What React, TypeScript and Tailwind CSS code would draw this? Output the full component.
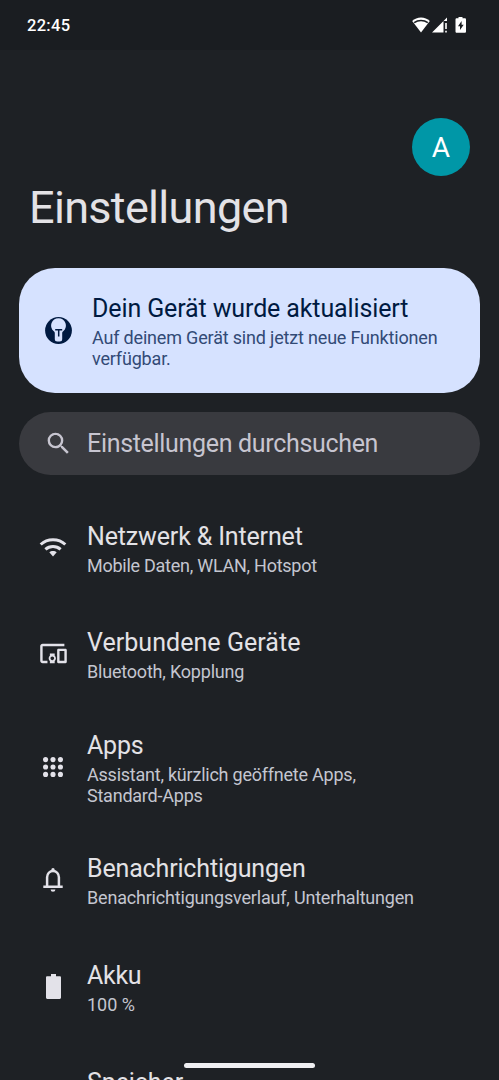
import type { ReactNode } from "react";
import { MdSearch, MdDevicesOther } from "react-icons/md";

type Item = {
  title: string;
  titleClass: string;
  lines: string[];
  lineClass: string;
  icon: ReactNode;
  height: string;
};

function DotsIcon() {
  const steps = [2.5, 9.75, 17];
  return (
    <svg width="20" height="20" viewBox="0 0 19.5 19.5" fill="currentColor">
      {steps.map((y) => steps.map((x) => <circle key={`${x}-${y}`} cx={x} cy={y} r="2.5" />))}
    </svg>
  );
}

function WifiIcon() {
  return (
    <svg width="28" height="20" viewBox="0 0 28 20" className="shrink-0" fill="none" stroke="currentColor" strokeWidth="3">
      <path d="M1.700 7.500C8.400 1 19.600 1 26.300 7.500" />
      <path d="M6.400 12.300C10.600 8.400 17.400 8.400 21.600 12.300" />
      <path d="M14 13.900c1.500 0 2.700.5 3.700 1.400L14 19.400l-3.700-4.100c1-.9 2.200-1.400 3.700-1.400z" fill="currentColor" stroke="none" />
    </svg>
  );
}

function BellIcon() {
  return (
    <svg width="20" height="26" viewBox="0 0 20 26" className="shrink-0" fill="none" stroke="currentColor" strokeWidth="2.500">
      <path d="M.3 19.750h19.400" />
      <path d="M4.100 19.750V10.200a5.900 6.300 0 0 1 11.800 0v9.500" />
      <path d="M8.300 4V2.700a1.700 1.700 0 0 1 3.400 0V4zM7.600 22.500h4.800a2.400 2.200 0 0 1-4.800 0z" fill="currentColor" stroke="none" />
    </svg>
  );
}

function BatteryIcon() {
  return (
    <svg width="15" height="25" viewBox="0 0 15 25" className="shrink-0" fill="currentColor">
      <path d="M5 0h5v2.300h3.700c.8 0 1.300.5 1.300 1.300v20c0 .8-.5 1.400-1.300 1.400H1.300C.5 25 0 24.400 0 23.600v-20c0-.8.5-1.300 1.300-1.300H5z" />
    </svg>
  );
}

const items: Item[] = [
  { title: "Netzwerk & Internet", titleClass: "tracking-[-0.15px]", lines: ["Mobile Daten, WLAN, Hotspot"], lineClass: "tracking-[-0.26px]", icon: <WifiIcon />, height: "h-[106px]" },
  { title: "Verbundene Geräte", titleClass: "tracking-[0.05px]", lines: ["Bluetooth, Kopplung"], lineClass: "tracking-[-0.2px]", icon: <MdDevicesOther size={29} className="shrink-0" />, height: "h-[107px]" },
  { title: "Apps", titleClass: "tracking-[-0.2px]", lines: ["Assistant, kürzlich geöffnete Apps,", "Standard-Apps"], lineClass: "tracking-[-0.23px]", icon: <DotsIcon />, height: "h-[119px]" },
  { title: "Benachrichtigungen", titleClass: "tracking-[-0.16px]", lines: ["Benachrichtigungsverlauf, Unterhaltungen"], lineClass: "tracking-[-0.19px]", icon: <BellIcon />, height: "h-[107px]" },
  { title: "Akku", titleClass: "tracking-[-0.3px]", lines: ["100 %"], lineClass: "tracking-[0px]", icon: <BatteryIcon />, height: "h-[106px]" },
  { title: "Speicher", titleClass: "tracking-[-0.1px]", lines: [], lineClass: "tracking-[0px]", icon: null, height: "h-[87px]" },
];

function StatusBar() {
  return (
    <header className="flex h-[50px] shrink-0 items-center bg-[#1a1d21] pl-[27px] pr-[28px] text-white">
      <span className="grow pt-[2px] text-[16.5px] font-medium tracking-[0.3px]">22:45</span>
      <svg width="18" height="16" viewBox="0 0 18 16" className="mr-[2px]">
        <path d="M9 .5C5.600 .5 2.500 1.800 .2 3.900L9 15.500l8.800-11.600C15.500 1.800 12.400 .5 9 .5z" fill="white" />
        <path d="M2.200 5.700C6.200 2.700 11.800 2.700 15.800 5.700" fill="none" stroke="#1a1d21" strokeWidth="1.500" />
      </svg>
      <svg width="16" height="16" viewBox="0 0 16 16" className="mr-[4px]" fill="white">
        <path d="M0 15.500L15 .5V4h-3.500v11.500zM13.200 6h1.600v6h-1.600zM13.200 13.700h1.600v1.800h-1.600z" />
      </svg>
      <svg width="20" height="18" viewBox="0 0 20 18" className="-mr-[1px] shrink-0">
        <path d="M6.500 1h4v1.200h2.200c.8 0 1.300.5 1.300 1.300v12c0 .8-.5 1.300-1.300 1.300H4.800c-.8 0-1.300-.5-1.300-1.300v-12c0-.8.5-1.300 1.300-1.300h1.700z" fill="white" />
        <path d="M9.600 5v3.800h2.100L8 14v-3.800H6z" fill="#1a1d21" />
      </svg>
    </header>
  );
}

function UpdateCard() {
  return (
    <section className="mx-[19px] mt-[35px] flex h-[125px] w-[461px] shrink-0 items-center rounded-[36px] bg-[#d6e2ff] pl-[26px]">
      <svg width="27" height="27" viewBox="0 0 27 27" className="shrink-0">
        <circle cx="13.500" cy="13.500" r="13.400" fill="#001a41" />
        <path d="M13.500 1.200a7.400 7.400 0 0 0-4.700 13.100c.9.800 1 1.300 1 2.300v5.500a2.500 2.500 0 0 0 2.500 2.500h2.400a2.500 2.500 0 0 0 2.500-2.500v-5.500c0-1 .1-1.500 1-2.300A7.400 7.400 0 0 0 13.500 1.200z" fill="#d6e2ff" />
        <path d="M10.200 12.700h7M13.700 12.700v6.900" stroke="#001a41" strokeWidth="1.500" />
      </svg>
      <div className="ml-[20px] whitespace-nowrap pt-[1px]">
        <h2 className="mb-[3px] text-[25px] leading-[31px] tracking-[-0.12px] text-[#001a41]">Dein Gerät wurde aktualisiert</h2>
        <p className="text-[18px] leading-[21px] tracking-[-0.18px] text-[#324a76]">
          Auf deinem Gerät sind jetzt neue Funktionen
          <br />
          verfügbar.
        </p>
      </div>
    </section>
  );
}

function Row({ item }: { item: Item }) {
  return (
    <li className={`flex shrink-0 items-center ${item.height}`}>
      <div className="ml-[39px] flex w-[28px] shrink-0 justify-center text-[#e3e2e9]">{item.icon}</div>
      <div className="ml-[20px] whitespace-nowrap pt-[2px]">
        <h3 className={`mb-[2px] text-[25px] leading-[32px] text-[#e3e2e6] ${item.titleClass}`}>{item.title}</h3>
        {item.lines.map((line) => (
          <p key={line} className={`text-[18px] leading-[21px] text-[#c4c6d0] ${item.lineClass}`}>{line}</p>
        ))}
      </div>
    </li>
  );
}

export default function App() {
  return (
    <main className="relative flex h-[1080px] w-[499px] flex-col overflow-hidden bg-[#1e2125] font-['Roboto',sans-serif]">
      <StatusBar />
      <div className="mr-[29px] mt-[68px] flex size-[58px] shrink-0 items-center justify-center self-end rounded-full bg-[#0097a7] pt-[2px] text-[28px] text-white">A</div>
      <h1 className="mb-[-1px] ml-[29px] mt-[6px] shrink-0 text-[45px] leading-[52px] tracking-[-0.68px] text-[#e3e2e6]">Einstellungen</h1>
      <UpdateCard />
      <div className="mx-[19px] mt-[19px] flex h-[63px] w-[461px] shrink-0 items-center rounded-full bg-[#393a3f] text-[#c7c5d0]">
        <MdSearch size={29} className="ml-[25px]" />
        <span className="ml-[14px] text-[25px] tracking-[-0.32px]">Einstellungen durchsuchen</span>
      </div>
      <ul className="mt-[19px] flex shrink-0 flex-col">
        {items.map((item) => (
          <Row key={item.title} item={item} />
        ))}
      </ul>
      <div className="absolute bottom-[12px] left-[184px] h-[5px] w-[131px] rounded-full bg-[#efeff2]" />
    </main>
  );
}
